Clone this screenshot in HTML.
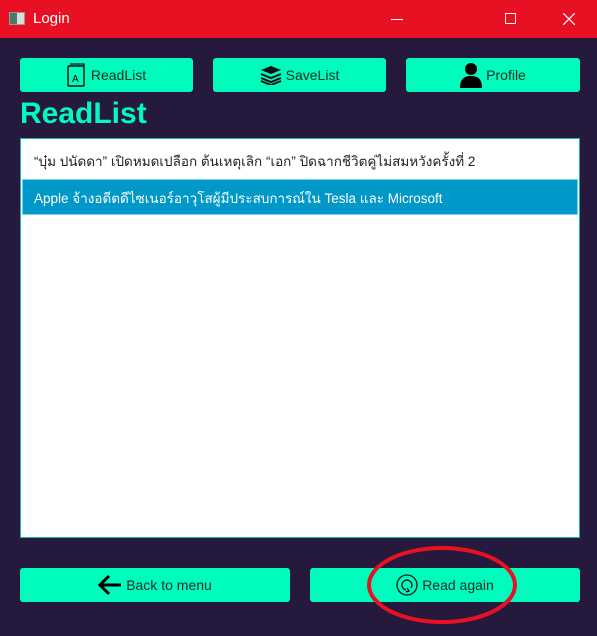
<!DOCTYPE html>
<html><head><meta charset="utf-8"><style>
*{margin:0;padding:0;box-sizing:border-box}
body{width:597px;height:636px;background:#25193d;font-family:"Liberation Sans","Noto Sans CJK SC",sans-serif;position:relative;overflow:hidden}
.tb{position:absolute;left:0;top:0;width:597px;height:38px;background:#e81123;color:#fff}
.btn{position:absolute;background:#00fcbc;border-radius:3px;display:flex;align-items:center;justify-content:center;font-size:14px;color:#1a2a2a}
.btn svg{margin-right:4px}
.list{position:absolute;left:20px;top:138px;width:560px;height:400px;background:#fff;border:1px solid #1ab6b0}
.it{position:absolute;left:13px;font-size:13.5px;color:#222;white-space:nowrap}
</style></head><body>
<div class="tb">
<div style="position:absolute;left:9px;top:12px;width:16px;height:13px;background:#ddd;border:1px solid #999"><div style="width:7px;height:11px;background:#4a7a6a"></div></div>
<div style="position:absolute;left:33px;top:10px;font-size:15px">Login</div>
<div style="position:absolute;left:391px;top:19px;width:12px;height:1px;background:#fff"></div>
<div style="position:absolute;left:505px;top:13px;width:11px;height:11px;border:1px solid #fff"></div>
<svg style="position:absolute;left:563px;top:13px" width="12" height="12"><path d="M0 0L12 12M12 0L0 12" stroke="#fff" stroke-width="1.2"/></svg>
</div>
<div class="btn" style="left:20px;top:58px;width:173px;height:34px"><svg width="20" height="24" viewBox="0 0 20 24"><rect x="1" y="3" width="16" height="20" rx="1" fill="none" stroke="#111" stroke-width="1.5"/><path d="M3 1h14v2" fill="none" stroke="#111" stroke-width="1.3"/><text x="5" y="19" font-size="10" font-family="Liberation Sans">A</text></svg>ReadList</div>
<div class="btn" style="left:213px;top:58px;width:173px;height:34px"><svg width="22" height="20" viewBox="0 0 22 20"><path d="M1 5l10-4 10 4-10 4z" fill="#111"/><path d="M1 9l10 4 10-4M1 13l10 4 10-4M1 16l10 4 10-4" fill="none" stroke="#111" stroke-width="2"/></svg>SaveList</div>
<div class="btn" style="left:406px;top:58px;width:174px;height:34px"><svg width="22" height="26" viewBox="0 0 22 26"><circle cx="11" cy="7" r="6" fill="#000"/><path d="M0 26c0-9 4-12 11-12s11 3 11 12z" fill="#000"/></svg>Profile</div>
<div style="position:absolute;left:20px;top:97px;font-size:30px;font-weight:bold;color:#00fcbc">ReadList</div>
<div class="list">
<div class="it" style="top:11px">“บุ๋ม ปนัดดา” เปิดหมดเปลือก ต้นเหตุเลิก “เอก” ปิดฉากชีวิตคู่ไม่สมหวังครั้งที่ 2</div>
<div style="position:absolute;left:1px;top:40px;width:556px;height:36px;background:#0098c8;border:1px solid #7fd0ea"></div>
<div class="it" style="top:48px;color:#fff">Apple จ้างอดีตดีไซเนอร์อาวุโสผู้มีประสบการณ์ใน Tesla และ Microsoft</div>
</div>
<div class="btn" style="left:20px;top:568px;width:270px;height:34px"><svg width="24" height="22" viewBox="0 0 24 22"><path d="M23 11H3M11 2L2 11l9 9" fill="none" stroke="#000" stroke-width="3"/></svg>Back to menu</div>
<div class="btn" style="left:310px;top:568px;width:270px;height:34px"><svg width="22" height="22" viewBox="0 0 22 22"><circle cx="11" cy="11" r="10" fill="none" stroke="#111" stroke-width="1.3"/><path d="M15 14A5 5 0 1 0 10 16M11 14l2 3-3 1" fill="none" stroke="#111" stroke-width="1.3"/></svg>Read again</div>
<svg style="position:absolute;left:0;top:0" width="597" height="636"><ellipse cx="442" cy="585" rx="73" ry="37" fill="none" stroke="#e81123" stroke-width="4"/></svg>
</body></html>
